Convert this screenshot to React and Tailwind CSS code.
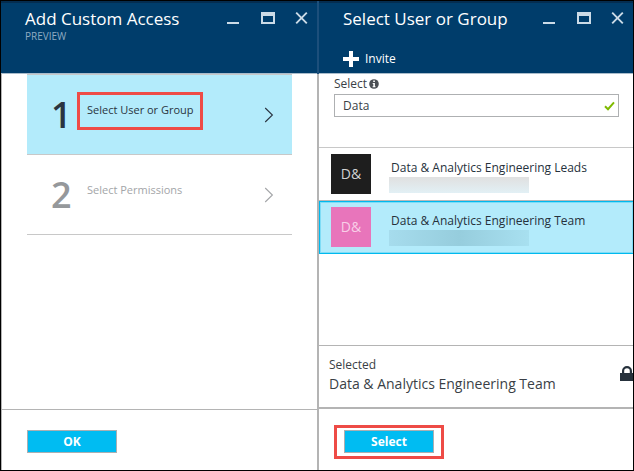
import React from "react";

function WindowControls() {
  return (
    <div className="flex gap-5 pt-[9px] pr-2 text-[#cbdbe7]">
      <button type="button" aria-label="Minimize" className="h-[14px] w-[14px]">
        <svg viewBox="0 0 14 14" className="block h-[14px] w-[14px]" fill="currentColor" shapeRendering="crispEdges">
          <rect x="0" y="10" width="12" height="2" />
        </svg>
      </button>
      <button type="button" aria-label="Maximize" className="h-[14px] w-[14px]">
        <svg viewBox="0 0 14 14" className="block h-[14px] w-[14px]" fill="currentColor" shapeRendering="crispEdges">
          <path fillRule="evenodd" d="M0 0H14V12H0ZM2 4V10H12V4Z" />
        </svg>
      </button>
      <button type="button" aria-label="Close" className="h-[14px] w-[14px]">
        <svg viewBox="0 0 14 14" className="block h-[14px] w-[14px]" fill="none" stroke="currentColor" strokeWidth="1.9">
          <path d="M1.2 .7 11.8 11.3M11.8 .7 1.2 11.3" />
        </svg>
      </button>
    </div>
  );
}

function BladeHeader({ title, subtitle, children }) {
  return (
    <header className="flex h-[73px] shrink-0 flex-col border-t-2 border-b border-t-[#042d50] border-b-[#a9bccb] bg-[#003d6b] text-white">
      <div className="flex justify-between pl-6">
        <div className="whitespace-nowrap">
          <h1 className="pt-1 text-[17px] leading-6">{title}</h1>
          {subtitle && <p className="text-[10px] leading-[10px] text-[#8fabc2]">{subtitle}</p>}
        </div>
        <WindowControls />
      </div>
      {children}
    </header>
  );
}

function Step({ number, label, active, marked }) {
  return (
    <li className="border-b border-[#c8c8c8]">
      <button
        type="button"
        className={
          active
            ? "flex h-[79px] w-full items-center bg-[#b3ebfb] pl-6 pr-[18px] text-left text-[#2a3440]"
            : "flex h-[79px] w-full items-center pl-6 pr-[18px] text-left text-[#a3a5a8]"
        }
      >
        <span className={active ? "w-[26px] text-4xl font-semibold" : "w-[26px] text-4xl font-semibold text-[#95989b]"}>
          {number}
        </span>
        <span
          className={
            marked
              ? "mb-2 flex h-[38px] w-[126px] items-center border-[3px] border-[#ee4b46] pl-[7px] text-[11px] whitespace-nowrap"
              : "mb-2 flex h-[38px] w-[126px] items-center border-[3px] border-transparent pl-[7px] text-[11px] whitespace-nowrap"
          }
        >
          {label}
        </span>
        <svg viewBox="0 0 10 16" className="ml-auto h-4 w-[10px]" fill="none" stroke="currentColor" strokeWidth="1.1">
          <path d="M1.2 1 8.4 8 1.2 15" />
        </svg>
      </button>
    </li>
  );
}

function GroupRow({ name, selected }) {
  return (
    <li>
      <button
        type="button"
        className={
          selected
            ? "flex h-[53px] w-full border border-r-0 border-[#00b9ee] bg-[#b3ebfb] pt-[5px] pl-[11px] text-left inset-shadow-[0_0_0_1px_#7fdcf6]"
            : "flex h-[53px] w-full border-b border-[#bbb8b8] pt-[6px] pl-3 text-left"
        }
      >
        <span
          className={
            selected
              ? "flex h-10 w-10 shrink-0 items-center justify-center bg-[#e875bb] text-sm text-[#f8cfe7]"
              : "flex h-10 w-10 shrink-0 items-center justify-center bg-[#1e1e1e] text-sm text-[#d2d2d2]"
          }
        >
          D&amp;
        </span>
        <span className="ml-[18px] flex flex-col pt-[5px]">
          <span className="pl-[2px] text-xs leading-[18px] font-medium whitespace-nowrap text-[#26313c]">{name}</span>
          <span
            className={
              selected
                ? "h-4 w-[140px] bg-linear-to-r from-[#a6dced] via-[#96cddd] to-[#a8e0f0]"
                : "h-4 w-[140px] bg-linear-to-b from-[#e0e0e0] to-[#e2f0f5]"
            }
          />
        </span>
      </button>
    </li>
  );
}

function ActionButton({ children }) {
  return (
    <button type="button" className="block h-[23px] w-[90px] border border-[#aaafb2] bg-[#00bcf2] text-xs leading-[21px] font-bold text-white">
      {children}
    </button>
  );
}

export default function App() {
  return (
    <div className="grid min-h-screen grid-cols-2 overflow-hidden border border-black bg-white font-['Open_Sans',sans-serif] text-[#3a3f46]">
      <section className="flex min-w-0 flex-col">
        <BladeHeader title="Add Custom Access" subtitle="PREVIEW" />
        <div className="flex flex-1 flex-col border-l border-[#b4b4b4]">
          <ol className="mr-[25px] ml-[25px] flex-1 border-t border-[#c8c8c8]">
            <Step number="1" label="Select User or Group" active marked />
            <Step number="2" label="Select Permissions" />
          </ol>
          <footer className="h-[61px] border-t border-[#b4b4b4] pt-5 pl-[25px]">
            <ActionButton>OK</ActionButton>
          </footer>
        </div>
      </section>

      <section className="flex min-w-0 flex-col">
        <div className="border-l-2 border-[#1c4f7b]">
          <BladeHeader title="Select User or Group">
            <button type="button" className="mt-[18px] ml-6 flex h-5 items-center gap-[6px] self-start text-xs">
              <svg viewBox="0 0 16 16" className="h-4 w-4" fill="currentColor" shapeRendering="crispEdges">
                <path d="M6 0h4v6h6v4h-6v6H6v-6H0V6h6z" />
              </svg>
              Invite
            </button>
          </BladeHeader>
        </div>
        <div className="flex flex-1 flex-col border-l-2 border-[#b4b4b4]">
          <div className="h-[74px] border-b border-[#c8c8c8] pr-[14px] pl-[15px]">
            <label htmlFor="search" className="flex h-5 items-center gap-[2px] text-xs">
              Select
              <svg viewBox="0 0 10 10" className="h-[10px] w-[10px]">
                <circle cx="5" cy="5" r="4.8" fill="#4b4f54" />
                <path d="M4.2 1.6h1.7v1.5H4.2zM3.7 4h2.2v3.3h.6v.9H3.6v-.9h.7V4.9h-.6z" fill="#fff" />
              </svg>
            </label>
            <div className="flex h-[23px] items-center border border-[#aeb0b2] pr-[3px] pl-2">
              <input id="search" type="text" defaultValue="Data" className="min-w-0 flex-1 text-xs leading-5 outline-none" />
              <svg viewBox="0 0 11 10" className="h-[10px] w-[11px]" fill="none" stroke="#7fba00" strokeWidth="2">
                <path d="M1 5.2 4 8.2 10 1.4" />
              </svg>
            </div>
          </div>
          <ul className="flex-1">
            <GroupRow name="Data & Analytics Engineering Leads" />
            <GroupRow name="Data & Analytics Engineering Team" selected />
          </ul>
          <div className="flex h-[64px] items-start justify-between border-t border-b-2 border-[#b4b4b4] pl-[10px]">
            <div className="pt-[10px] whitespace-nowrap">
              <p className="text-xs leading-[18px]">Selected</p>
              <p className="text-sm leading-5">Data &amp; Analytics Engineering Team</p>
            </div>
            <svg viewBox="0 0 13 15" className="mt-5 h-[15px] w-[13px] shrink-0" fill="#26313c">
              <path d="M0 7h2V5a5 5 0 0 1 10 0v2h1v8H0zM4.2 7h5.6V5a2.8 2.8 0 0 0-5.6 0z" />
            </svg>
          </div>
          <footer className="h-[61px] pt-4 pl-[15px]">
            <div className="flex h-[34px] w-[110px] items-start justify-center border-[3px] border-[#ee4b46] pt-[2px]">
              <ActionButton>Select</ActionButton>
            </div>
          </footer>
        </div>
      </section>
    </div>
  );
}
